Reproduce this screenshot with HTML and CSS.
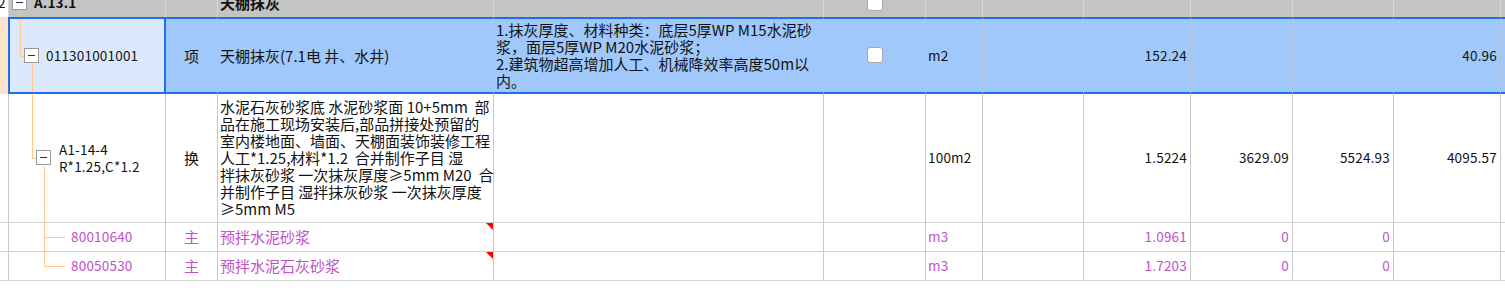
FILE: index.html
```html
<!DOCTYPE html>
<html lang="zh-CN">
<head>
    <meta charset="UTF-8">
    <meta name="viewport" content="width=device-width, initial-scale=1.0">
    <title>分部分项工程</title>
    <link rel="stylesheet" href="styles.css">
</head>
<body>
    <div class="sheet">
        <!-- parent section, scrolled half out of view -->
        <div class="row group">
            <div class="idx"><span class="num">2</span></div>
            <div class="code lv0"><span class="tog"></span><span class="num">A.13.1</span></div>
            <div></div>
            <div class="name">天棚抹灰</div>
            <div></div>
            <div class="chk"><span class="box"></span></div>
            <div></div>
            <div></div>
            <div></div>
            <div></div>
            <div></div>
            <div></div>
            <div class="end"></div>
        </div>

        <div class="row sel">
            <div class="idx"></div>
            <div class="code lv1"><span class="tog"></span><span class="num">011301001001</span></div>
            <div class="type">项</div>
            <div class="name">天棚抹灰(7.1电 井、水井)</div>
            <div class="name"><span class="lines">1.抹灰厚度、材料种类：底层5厚WP M15水泥砂<br>浆，面层5厚WP M20水泥砂浆；<br>2.建筑物超高增加人工、机械降效率高度50m以<br>内。</span></div>
            <div class="chk"><span class="box"></span></div>
            <div class="unit num">m2</div>
            <div></div>
            <div class="num r">152.24</div>
            <div></div>
            <div></div>
            <div class="num r">40.96</div>
            <div class="end"></div>
        </div>

        <div class="row sub">
            <div class="idx"></div>
            <div class="code lv2"><span class="tog"></span><span class="num lines">A1-14-4<br>R*1.25,C*1.2</span></div>
            <div class="type">换</div>
            <div class="name"><span class="lines">水泥石灰砂浆底 水泥砂浆面 10+5mm  部<br>品在施工现场安装后,部品拼接处预留的<br>室内楼地面、墙面、天棚面装饰装修工程<br>人工*1.25,材料*1.2  合并制作子目 湿<br>拌抹灰砂浆 一次抹灰厚度≥5mm M20  合<br>并制作子目 湿拌抹灰砂浆 一次抹灰厚度<br>≥5mm M5</span></div>
            <div></div>
            <div></div>
            <div class="unit num">100m2</div>
            <div></div>
            <div class="num r">1.5224</div>
            <div class="num r">3629.09</div>
            <div class="num r">5524.93</div>
            <div class="num r">4095.57</div>
            <div class="end"></div>
        </div>

        <div class="row mat">
            <div class="idx"></div>
            <div class="code leaf mid"><span class="num">80010640</span></div>
            <div class="type">主</div>
            <div class="name mark">预拌水泥砂浆</div>
            <div></div>
            <div></div>
            <div class="unit num">m3</div>
            <div></div>
            <div class="num r">1.0961</div>
            <div class="num r">0</div>
            <div class="num r">0</div>
            <div></div>
            <div class="end"></div>
        </div>

        <div class="row mat">
            <div class="idx"></div>
            <div class="code leaf"><span class="num">80050530</span></div>
            <div class="type">主</div>
            <div class="name mark">预拌水泥石灰砂浆</div>
            <div></div>
            <div></div>
            <div class="unit num">m3</div>
            <div></div>
            <div class="num r">1.7203</div>
            <div class="num r">0</div>
            <div class="num r">0</div>
            <div></div>
            <div class="end"></div>
        </div>
    </div>
</body>
</html>
```

FILE: styles.css
```css
body {
    margin: 0;
    background-color: #fff;
    font-family: "Noto Sans CJK SC", sans-serif;
    font-size: 15px;
    line-height: 17px;
    color: #111;
    overflow: hidden;
}
.sheet {
    width: 1505px;
}
.row {
    display: grid;
    grid-template-columns: 9px 157px 52px 276px 330px 102px 57px 101px 107px 102px 101px 107px 1fr;
}
.row > div {
    display: flex;
    align-items: center;
    box-sizing: border-box;
    position: relative;
    padding: 0 2px;
    border-right: 1px solid #c9c9c9;
    border-bottom: 1px solid #d3d3d3;
    white-space: nowrap;
    overflow: hidden;
}
.row > .end {
    border-right: none;
}
.num {
    font-size: 13.5px;
    letter-spacing: 0.2px;
}
.lines {
    white-space: pre;
}
.type, .chk {
    justify-content: center;
}
.row > .r {
    justify-content: flex-end;
    padding-right: 3px;
}
.row > .unit {
    padding-left: 2px;
}

/* parent row */
.group {
    height: 29px;
    margin-top: -12px;
    font-weight: bold;
}
.group > div {
    background-color: #c4c4c4;
    border-right-color: #d7d7d7;
    border-bottom: none;
}
.group > .idx {
    background-color: #fff;
    font-weight: normal;
}
.idx .num {
    margin-left: -4px;
}

/* selected row */
.sel > div {
    padding-top: 2px;
    padding-bottom: 3px;
    background-color: #a0c8fa;
    border-top: 2px solid #1d6ef0;
    border-bottom: 2px solid #1d6ef0;
    border-right-color: #b4c2d4;
}
.sel > .idx {
    background-color: #fde4c6;
    border-top: none;
    border-bottom: none;
    border-right-color: #1d6ef0;
}
.sel > .code {
    background-color: #dce9fc;
    border-right-color: #1d6ef0;
    box-shadow: inset 1px 0 #1d6ef0, inset -1px 0 #1d6ef0;
}

.sub > div {
    padding-top: 4px;
    padding-bottom: 5px;
}
.mat > div {
    padding-top: 5px;
    padding-bottom: 6px;
}
.mat {
    color: #c052c9;
}

/* tree column */
.tog {
    width: 15px;
    height: 15px;
    box-sizing: border-box;
    flex: none;
    position: relative;
    margin-right: 7px;
    background-color: #fff;
    border: 1px solid #9a9a9a;
}
.tog::before {
    content: "";
    position: absolute;
    left: 3px;
    right: 3px;
    top: 6px;
    height: 1px;
    background-color: #333;
}
.code::before, .code::after {
    content: "";
    position: absolute;
    border: 0 solid #ffca8c;
}
.row > .lv0 { padding-left: 3px; }
.row > .lv1 { padding-left: 15px; }
.row > .lv2 { padding-left: 27px; }
.row > .leaf { padding-left: 62px; }
.lv2 .num { margin-left: 1px; }
.lv0::after, .lv1::after, .lv2::after {
    top: calc(50% + 8px);
    bottom: 0;
    border-left-width: 1px;
}
.lv0::after { left: 11px; }
.lv1::after { left: 23px; }
.lv2::after { left: 35px; }
.lv1::before, .lv2::before, .leaf::before {
    top: 0;
    height: 50%;
    border-left-width: 1px;
    border-bottom-width: 1px;
}
.lv1::before { left: 11px; width: 4px; }
.lv2::before { left: 23px; width: 4px; }
.leaf::before { left: 35px; width: 20px; }
.leaf.mid::after {
    left: 35px;
    top: 50%;
    bottom: 0;
    border-left-width: 1px;
}

/* checkbox and note marker */
.box {
    width: 16px;
    height: 16px;
    box-sizing: border-box;
    background-color: #fff;
    border: 1px solid #a8a8a8;
    border-radius: 3px;
}
.mark::after {
    content: "";
    position: absolute;
    top: 0;
    right: 0;
    border-top: 7px solid #f00;
    border-left: 7px solid transparent;
}
```
